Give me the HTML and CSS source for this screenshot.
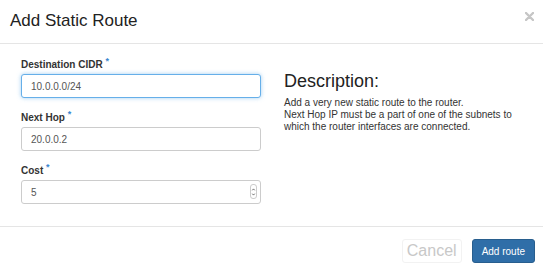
FILE: index.html
```html
<!DOCTYPE html>
<html lang="en">
<head>
  <meta charset="UTF-8" />
  <title>Add Static Route</title>
  <link rel="stylesheet" href="styles.css">
</head>
<body>
  <div class="modal">
    <div class="modal-header">
      <h3>Add Static Route</h3>
      <span class="close">
        <svg width="9" height="9" viewBox="0 0 9 9"><path d="M1 1L8 8M8 1L1 8" stroke="#c6c6c6" stroke-width="2.4" stroke-linecap="round"/></svg>
      </span>
    </div>

    <div class="modal-body">
      <div class="form-col">
        <div class="form-group">
          <label for="cidr">Destination CIDR <span class="req">*</span></label>
          <input type="text" id="cidr" class="focused" value="10.0.0.0/24" />
        </div>
        <div class="form-group">
          <label for="nexthop">Next Hop <span class="req">*</span></label>
          <input type="text" id="nexthop" value="20.0.0.2" />
        </div>
        <div class="form-group">
          <label for="cost">Cost <span class="req">*</span></label>
          <div class="number-wrap">
            <input type="text" id="cost" value="5" />
            <span class="spinner">
              <svg width="6" height="14" viewBox="0 0 6 14"><path d="M1.5 5L3 3.3L4.5 5M1.5 9L3 10.7L4.5 9" fill="none" stroke="#555" stroke-width="1"/></svg>
            </span>
          </div>
        </div>
      </div>

      <div class="desc-col">
        <h3>Description:</h3>
        <p>Add a very new static route to the router.<br>
        Next Hop IP must be a part of one of the subnets to which the router interfaces are connected.</p>
      </div>
    </div>

    <div class="modal-footer">
      <button class="btn-cancel">Cancel</button>
      <button class="btn-primary">Add route</button>
    </div>
  </div>
</body>
</html>
```

FILE: styles.css
```css
body {
  margin: 0;
  font-family: 'Liberation Sans', Arial, sans-serif;
  background-color: #fff;
  color: #333;
}

.modal {
  width: 543px;
  height: 267px;
  overflow: hidden;
}

.modal-header {
  display: flex;
  justify-content: space-between;
  padding: 11px 9px 12px 10px;
  border-bottom: 1px solid #e5e5e5;
}

.modal-header h3 {
  margin: 0;
  font-size: 17px;
  line-height: 20px;
  font-weight: normal;
  color: #222;
}

.close {
  display: flex;
  padding-top: 1px;
}

.modal-body {
  display: grid;
  grid-template-columns: 240px 1fr;
  column-gap: 23px;
  padding: 15px 21px 8px 21px;
}

.form-group {
  margin-bottom: 14px;
}

.form-group label {
  display: block;
  height: 12px;
  font-size: 10px;
  line-height: 12px;
  font-weight: bold;
  color: #333;
  margin-bottom: 3px;
}

.req {
  position: relative;
  top: -4px;
  line-height: 0;
  color: #3a87d0;
  font-size: 9px;
  font-weight: bold;
}

.form-group input {
  display: block;
  box-sizing: border-box;
  width: 100%;
  height: 24px;
  padding: 0 9px;
  border: 1px solid #ccc;
  border-radius: 3px;
  font-family: inherit;
  font-size: 10px;
  color: #555;
  outline: none;
}

.form-group input.focused {
  border-color: #66afe9;
  box-shadow: 0 0 4px rgba(102, 175, 233, 0.6);
}

.number-wrap {
  position: relative;
}

.spinner {
  position: absolute;
  top: 4px;
  right: 4px;
  box-sizing: border-box;
  width: 7px;
  height: 15px;
  border: 1px solid #ccc;
  border-radius: 3px;
  display: flex;
  align-items: center;
  justify-content: center;
}

.spinner svg {
  display: block;
}

.desc-col {
  padding-top: 11px;
}

.desc-col h3 {
  margin: 0 0 5px 0;
  font-size: 18px;
  line-height: 22px;
  font-weight: normal;
  color: #222;
}

.desc-col p {
  margin: 0;
  font-size: 10px;
  line-height: 12px;
  color: #333;
}

.modal-footer {
  display: flex;
  justify-content: flex-end;
  gap: 10px;
  padding: 12px 8px 0 0;
  border-top: 1px solid #e5e5e5;
}

.btn-cancel {
  height: 24px;
  padding: 0 4px;
  background: #fff;
  border: 1px solid #f2f2f2;
  border-radius: 3px;
  font-family: inherit;
  font-size: 16px;
  color: #c8c8c8;
}

.btn-primary {
  height: 24px;
  padding: 0 9px;
  background-color: #2f6ea8;
  border: 1px solid #285e8e;
  border-radius: 3px;
  font-family: inherit;
  font-size: 10px;
  color: #fff;
}
```
